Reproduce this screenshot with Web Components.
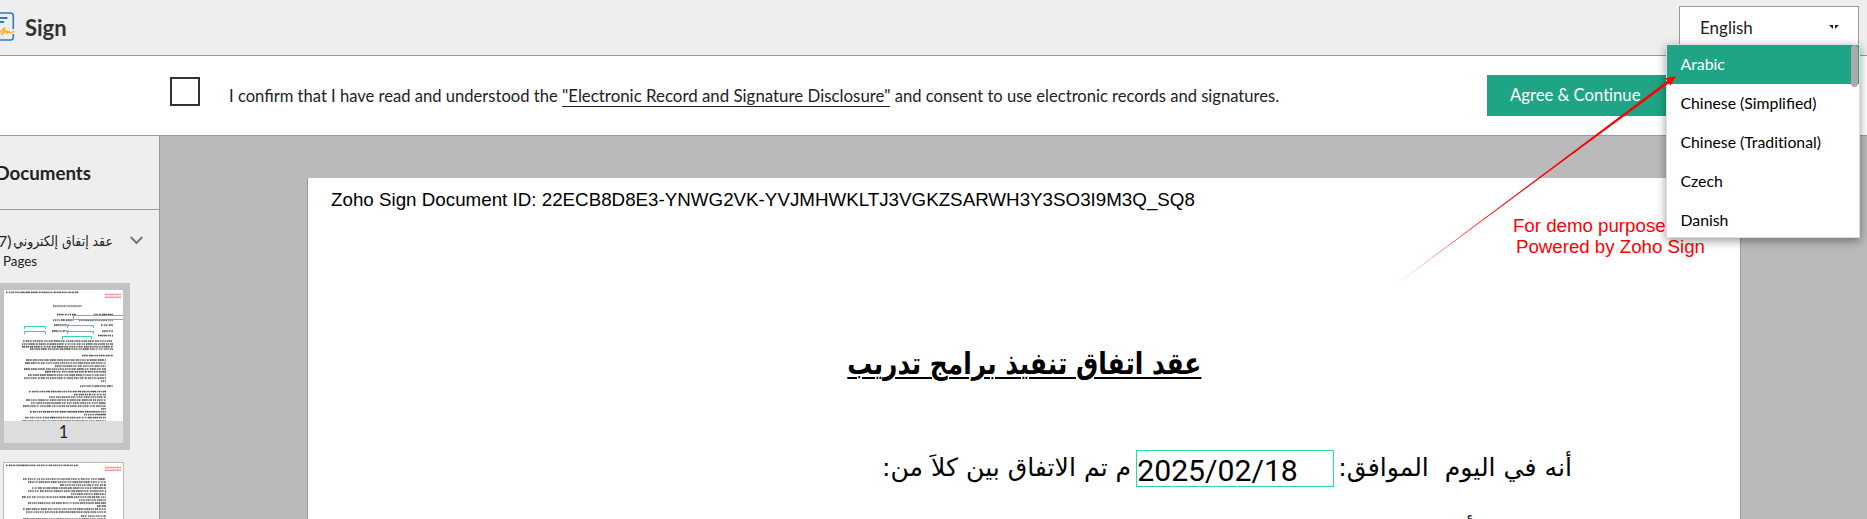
<!DOCTYPE html>
<html lang="en"><head><meta charset="utf-8"><title>Sign</title>
<style>html,body{margin:0;height:100%;overflow:hidden}body{font-family:Lato,"Liberation Sans",sans-serif;color:#222}</style></head>
<body><sign-app></sign-app>
<script>
const def=(name,html,init)=>customElements.define(name,class extends HTMLElement{
 constructor(){super();this.attachShadow({mode:'open'}).innerHTML=html;}
 connectedCallback(){if(init)init(this,this.shadowRoot);}
});

def('sign-logo',`<style>:host{display:block;width:15px;height:29px}svg{display:block}</style>
<svg width="15" height="29" viewBox="0 0 15 29" fill="none"><path d="M-2 1H10.500Q13.300 1 13.300 3.800V17M13.300 22V25.200Q13.300 28 10.500 28H-2" stroke="#2b7cc4" stroke-width="1.600"/><path d="M-1 6H7.500M-1 10H4" stroke="#2b7cc4" stroke-width="1.800"/><path d="M-1 21.500Q5 14.500 4.800 16.500L1.500 23Q6 17.500 6.800 19Q6 22 7.500 21Q9 19 9.500 20.500Q11 22 14 19" stroke="#fbb52b" stroke-width="1.600"/></svg>`);

def('language-select',`<style>:host{display:flex;box-sizing:border-box;width:180px;height:42px;border:1px solid #999;background:#fff;align-items:center;justify-content:space-between;padding:0 18px 0 20px;font-size:17px}svg{display:block}</style><slot></slot><svg width="12" height="5"><path d="M1 0H5V4ZM7 0H11L7 4Z" fill="#222"/></svg>`);

def('language-option',`<style>:host{display:flex;box-sizing:border-box;align-items:center;height:39px;padding:0 0 2px 13.500px;font-size:15.800px;color:#000}:host([selected]){background:#1fa585;color:#fff}:host([plain]){font-variant-ligatures:none}</style><slot></slot>`);

def('language-menu',`<style>:host{display:block;box-sizing:border-box;width:194px;height:194px;border:1px solid #ddd;background:#fff;box-shadow:0 3px 9px rgba(0,0,0,.4);overflow:hidden}
i{position:absolute;right:1px;top:0;width:7px;height:42px;border-radius:4px;background:#aaa}</style><slot></slot><i></i>`);

def('top-bar',`<style>:host{display:flex;box-sizing:border-box;height:56px;background:#eee;border-bottom:1px solid #999;padding:0 8px 0 0;align-items:flex-start}
sign-logo{margin-top:12px}b{font-size:22px;line-height:26px;margin:15px auto 0 10px;color:#333}language-select{margin-top:6px}</style>
<sign-logo></sign-logo><b>Sign</b><language-select>English</language-select>`);

def('consent-bar',`<style>:host{display:flex;box-sizing:border-box;height:80px;border-bottom:1px solid #999;background:#fff;padding-left:170px;align-items:flex-start}
.c{box-sizing:border-box;width:30px;height:29px;border:2px solid #333;margin-top:21px}
p{margin:29px auto 0 29px;font-size:16.580px;line-height:22px;white-space:nowrap}u{text-decoration:none;border-bottom:1px solid #222;font-size:16.860px}
.b{box-sizing:border-box;width:190px;height:41px;margin:19px 190px 0 0;background:#1fa585;color:#fff;font-size:16.650px;line-height:41px;padding-left:23px;font-variant-ligatures:none}</style>
<div class="c"></div><p>I confirm that I have read and understood the <u>"Electronic Record and Signature Disclosure"</u> and consent to use electronic records and signatures.</p><div class="b">Agree &amp; Continue</div>`);

const rnd=s=>()=>(s=(s*16807)%2147483647)/2147483647;
const row=(r,l,rt,y)=>{let o='',x=l;while(x<rt){const w=Math.min(2+r()*5,rt-x);o+=`<path d="M${x.toFixed(1)} ${y}h${w.toFixed(1)}" stroke="#222" stroke-opacity="${(.4+r()*.3).toFixed(2)}" stroke-width="1.300"/><path d="M${x.toFixed(1)} ${y+.2}h${w.toFixed(1)}" stroke="#111" stroke-opacity=".45" stroke-width="2.100" stroke-dasharray=".8 1.500"/>`;x+=w+.8;}return o;};
const first=[[49,78,16],[53,72,24.500],[90,109,24.500],[49,70,30],[75,109,30],[50,65,35],[97,109,35],[48,65,41],[98,109,41],[94,109,45.500],[19,109,51],[18,109,54],[18,109,56.700],[26,109,59],[78,109,65.500],[22,102,70],[21,102,73],[51,102,76],[20,102,79],[41,102,81.700],[24,102,85],[20,102,88],[97,102,91],[76,109,96],[25,102,101.500],[70,102,104.500],[45,102,107],[22,102,110],[27,102,113],[19,102,116],[97,102,118.700],[26,102,121.700],[80,102,124.500],[21,102,127.500],[18,102,131]];
const second=[[19,102,16],[24,102,19],[56,102,22],[28,102,25],[24,102,28],[67,102,31],[18,102,34],[75,102,37],[24,102,40],[93,102,43],[19,102,46],[22,102,49],[77,102,53],[19,102,56]];
def('page-thumb',`<style>:host{display:block;width:119px;height:131px;background:#fff;overflow:hidden}svg{display:block}</style><svg width="119" height="131"></svg>`,(e,s)=>{
 const r=rnd(+e.getAttribute('page')*77);let o=row(r,2,75,2.300)+'<path d="M101 4.500h16M101 7.200h16" stroke="#f33" stroke-width="1.600" stroke-dasharray="2 .4" stroke-opacity=".6"/>';
 for(const [a,b,y] of (e.getAttribute('page')==='1'?first:second))o+=row(r,a,b,y);
 if(e.getAttribute('page')==='1')o+='<path d="M119 25.500H69.500V29.500H119M20.500 39V36.500H41.500V39M63.500 38V35.500H89.500V38M20.500 44V41.500H41.500V44M63.500 44V41.500H89.500V44M58.500 49V46.500H87.500V49" fill="none" stroke="#2ed6ae"/>';
 s.querySelector('svg').innerHTML=o;});

def('document-sidebar',`<style>:host{display:flex;flex-direction:column;box-sizing:border-box;width:160px;border-right:1px solid #999;background:#eee;overflow:hidden;flex:none}
h2{margin:0;box-sizing:border-box;height:74px;flex:none;border-bottom:1px solid #999;font-size:18.700px;line-height:75px;padding-right:68px;white-space:nowrap;display:flex;justify-content:flex-end}
.d{display:flex;justify-content:flex-end;align-items:center;height:25px;margin-top:18px;padding-right:16px;flex:none;white-space:nowrap}
.d span,.d svg{flex:none}.num{font-size:16px;margin-right:auto;margin-left:-2px}
.ar{font:14px "DejaVu Sans",sans-serif;margin-right:17px;transform:scaleX(.890);transform-origin:right;margin-left:-12px}
.p{font-size:13.300px;line-height:17px;padding-left:3px;height:30px;flex:none}
.s{box-sizing:border-box;background:#c3c3c3;width:130px;height:167px;padding:7px 0 0 4px;flex:none}
.n{width:119px;height:22px;background:#ddd;text-align:center;font-size:16.500px;line-height:23px}
.q{border:1px solid #bbb;width:119px;margin:12px 0 0 3px;flex:none}</style>
<h2><span>Documents</span></h2><div class="d"><span class="num">7)</span><span class="ar" dir="rtl" lang="ar">عقد إتفاق إلكتروني</span><svg width="13" height="9" fill="none" stroke="#777" stroke-width="2"><path d="M.7 1L6.500 7L12.300 1"/></svg></div><div class="p">Pages</div>
<div class="s"><page-thumb page="1"></page-thumb><div class="n">1</div></div><div class="q"><page-thumb page="2"></page-thumb></div>`);

def('signature-page',`<style>:host{display:block;position:relative;box-sizing:border-box;width:1434px;height:341px;margin:42px 0 0 147px;background:#fff;border:solid #999;border-width:0 1px;color:#000;overflow:hidden;font-family:"Liberation Sans",sans-serif}
.top{display:flex;justify-content:space-between;white-space:nowrap;padding:11px 35px 0 23px;height:70px}
.id{font-size:18.770px;line-height:22px}
.demo{font-size:18.700px;line-height:21px;color:red;margin-top:26px}
.demo div:first-child{margin-left:-3px}
h1{margin:84px 0 0 539px;width:354px;height:42px;font:bold 30px/42px "DejaVu Sans",sans-serif;white-space:nowrap}
h1 span{display:inline-block;transform:scaleX(.8304);transform-origin:right;text-decoration:underline;text-decoration-thickness:1.500px;text-underline-offset:3px}
.line{display:flex;direction:rtl;white-space:pre;margin-top:65px;padding-right:168px;font:25.150px/35px "DejaVu Sans",sans-serif;height:37px}
.date{box-sizing:border-box;width:198px;height:37px;border:1px solid #2ed6ae;direction:ltr;font:30.200px/39px Roboto,sans-serif;margin:0 4px 0 5px}
.next{direction:rtl;font:25px/37px "DejaVu Sans",sans-serif;padding-right:168px;margin-top:25px}</style>
<div class="top"><div class="id">Zoho Sign Document ID: 22ECB8D8E3-YNWG2VK-YVJMHWKLTJ3VGKZSARWH3Y3SO3I9M3Q_SQ8</div><div class="demo"><div>For demo purpose</div><div>Powered by Zoho Sign</div></div></div>
<h1 dir="rtl" lang="ar"><span>عقد اتفاق تنفيذ برامج تدريب</span></h1>
<div class="line" lang="ar"><span>أنه في اليوم  الموافق:</span><div class="date">2025/02/18</div><span>م تم الاتفاق بين كلاَ من:</span></div>
<div class="next" lang="ar">الطرف الأول:</div>`);

def('pointer-arrow',`<style>:host{display:block}svg{display:block}</style><svg width="290" height="220"><defs><linearGradient id="g" gradientUnits="userSpaceOnUse" x1="0" y1="214" x2="100" y2="139"><stop offset="0" stop-color="red" stop-opacity=".5"/><stop offset="1" stop-color="red"/></linearGradient></defs><path d="M-1 214.500L274.300 7.800L272.300 5.200L283 3L277.700 12.600L275.800 10.200Z" fill="url(#g)"/></svg>`);

def('sign-app',`<style>:host{display:flex;flex-direction:column;height:519px;position:relative;overflow:hidden;background:#bababa}
.main{display:flex;flex:1;min-height:0;align-items:stretch}signature-page{flex:none}
language-menu{position:absolute;left:1666px;top:44px}pointer-arrow{position:absolute;left:1393px;top:73px;pointer-events:none}</style>
<top-bar></top-bar><consent-bar></consent-bar><div class="main"><document-sidebar></document-sidebar><signature-page></signature-page></div>
<language-menu><language-option selected>Arabic</language-option><language-option>Chinese (Simplified)</language-option><language-option plain>Chinese (Traditional)</language-option><language-option>Czech</language-option><language-option>Danish</language-option></language-menu><pointer-arrow></pointer-arrow>`);
</script></body></html>
